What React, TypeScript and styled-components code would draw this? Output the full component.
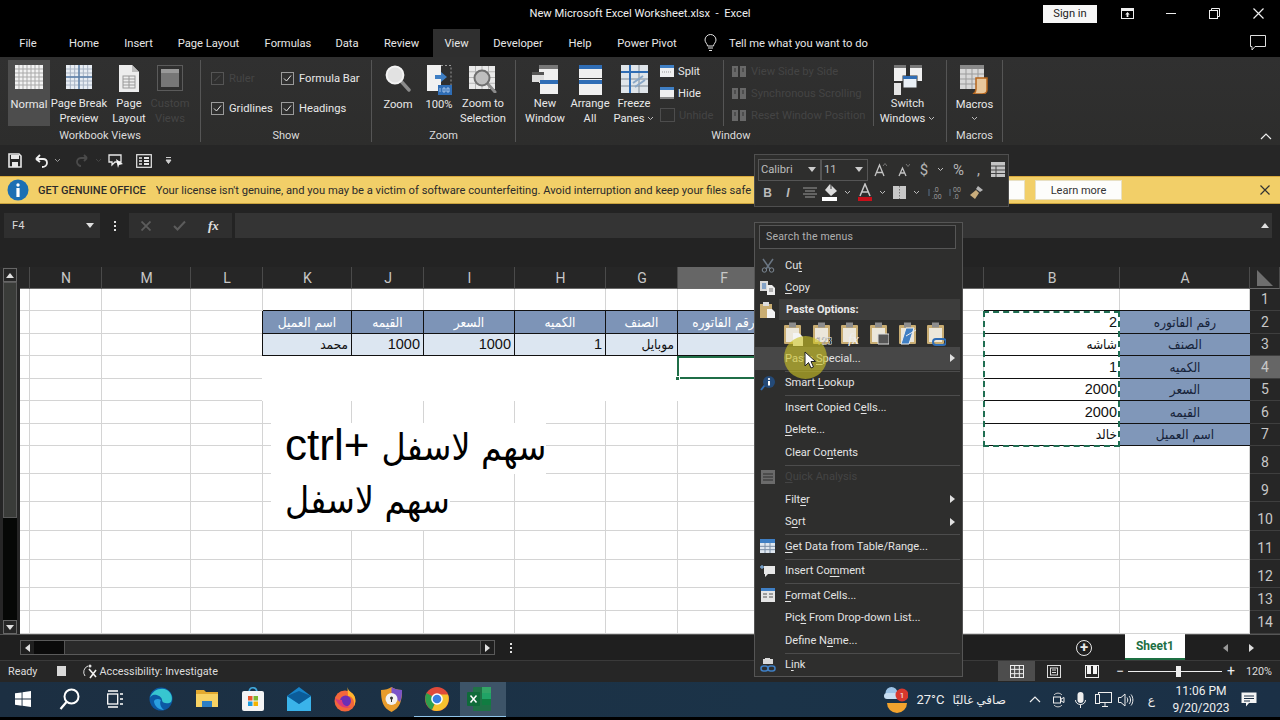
import { FC, ReactNode } from "react";
import styled, { createGlobalStyle } from "styled-components";

const UI = `Roboto, "DejaVu Sans", sans-serif`;
const CELL = `"Liberation Sans", "DejaVu Sans Condensed", "DejaVu Sans", sans-serif`;
const ARABIC = `"DejaVu Sans Condensed", "DejaVu Sans", sans-serif`;

const GlobalStyle = createGlobalStyle`
  html, body { margin: 0; padding: 0; background: #000; }
  * { box-sizing: border-box; }
`;

/* ---------- icons ---------- */
interface IconProps {
  w: number;
  h: number;
  children: ReactNode;
}
const Ic: FC<IconProps> = ({ w, h, children }) => (
  <svg width={w} height={h} viewBox={`0 0 ${w} ${h}`} fill="none" style={{ display: "block", flex: "none" }}>
    {children}
  </svg>
);

const gridLines = (x: number, y: number, w: number, h: number, cols: number, rows: number, c: string) => (
  <>
    {Array.from({ length: cols - 1 }, (_, i) => {
      const px = x + ((i + 1) * w) / cols;
      return <path key={`c${i}`} d={`M${px} ${y}V${y + h}`} stroke={c} strokeWidth="1" />;
    })}
    {Array.from({ length: rows - 1 }, (_, i) => {
      const py = y + ((i + 1) * h) / rows;
      return <path key={`r${i}`} d={`M${x} ${py}H${x + w}`} stroke={c} strokeWidth="1" />;
    })}
  </>
);

const NormalIcon = () => (
  <Ic w={28} h={24}>
    <rect width="28" height="24" fill="#f2f2f2" />
    {gridLines(0, 0, 28, 24, 7, 6, "#a9a9a9")}
  </Ic>
);
const PageBreakIcon = () => (
  <Ic w={26} h={24}>
    <rect width="26" height="24" fill="#e8edf3" />
    {gridLines(0, 0, 26, 24, 6, 6, "#a8b4c4")}
    <path d="M13 0V24M0 12H26" stroke="#5a7ea8" strokeWidth="1.4" />
  </Ic>
);
const PageLayoutIcon = () => (
  <Ic w={20} h={27}>
    <path d="M0 0H13L20 7V27H0Z" fill="#ededed" />
    <path d="M13 0V7H20" fill="#bdbdbd" />
    {gridLines(4, 11, 12, 12, 2, 4, "#9a9a9a")}
    <rect x="4" y="11" width="12" height="12" stroke="#9a9a9a" />
  </Ic>
);
const CustomIcon = () => (
  <Ic w={26} h={26}>
    <rect x=".5" y=".5" width="25" height="25" stroke="#5b5b5b" />
    <rect x="4" y="4" width="18" height="18" fill="#777" />
    <rect x="4" y="4" width="18" height="4" fill="#999" />
  </Ic>
);
const ZoomIcon = () => (
  <Ic w={26} h={27}>
    <path d="M15 15L24 25" stroke="#8b8b8b" strokeWidth="3.4" strokeLinecap="round" />
    <circle cx="10" cy="10" r="8.4" fill="#e2e2e2" stroke="#f3f3f3" strokeWidth="2" />
  </Ic>
);
const HundredIcon = () => (
  <Ic w={25} h={30}>
    <path d="M0 0H14V26H0Z" fill="#f1f1f1" />
    <path d="M14 .5H24V20" stroke="#999" strokeDasharray="2 2" />
    <path d="M8 10H14V7L20 12L14 17V14H8Z" fill="#3f7fc4" />
    <rect x="11" y="20" width="14" height="10" fill="#2f6db5" />
    <path d="M13 23V27M16 23H18V27H16ZM20 23H22V27H20Z" stroke="#bcd6f2" strokeWidth=".8" />
  </Ic>
);
const ZoomSelIcon = () => (
  <Ic w={28} h={28}>
    <rect x="0" y="1" width="26" height="23" fill="#e9e9e9" />
    {gridLines(0, 1, 26, 23, 4, 4, "#b5b5b5")}
    <path d="M18 18L26 27" stroke="#8b8b8b" strokeWidth="3" strokeLinecap="round" />
    <circle cx="13" cy="13" r="7.5" fill="#bfbfbf" stroke="#6f6f6f" strokeWidth="2" />
  </Ic>
);
const NewWindowIcon = () => (
  <Ic w={26} h={29}>
    <rect x="7" y="0" width="19" height="18" fill="#777" />
    <rect x="7" y="4" width="19" height="14" fill="#f0f0f0" />
    <rect x="0" y="7" width="12" height="10" fill="#dedede" />
    <rect x="0" y="7" width="12" height="3" fill="#555" />
    <rect x="8" y="15" width="18" height="14" fill="#f0f0f0" />
    <rect x="8" y="15" width="18" height="4" fill="#2f6db5" />
  </Ic>
);
const ArrangeIcon = () => (
  <Ic w={23} h={30}>
    <rect width="23" height="30" fill="#f0f0f0" />
    <rect width="23" height="4" fill="#2f6db5" />
    <rect y="15" width="23" height="4" fill="#2f6db5" />
    <rect y="13" width="23" height="1" fill="#333" />
  </Ic>
);
const FreezeIcon = () => (
  <Ic w={27} h={28}>
    <rect width="27" height="28" fill="#dfe5ea" />
    {gridLines(0, 0, 27, 28, 3, 4, "#7e8a96")}
    <path d="M9 0V28M0 7H27" stroke="#2f6db5" strokeWidth="2" />
    <path d="M12 18L22 11M14 22L24 15" stroke="#8aa8c8" strokeWidth="2" />
  </Ic>
);
const SmallWinIcon: FC<{ $bottom?: boolean }> = ({ $bottom }) => (
  <Ic w={14} h={12}>
    <rect width="14" height="12" fill="#f0f0f0" />
    <rect width="14" height="3" fill="#3f7fc4" />
    {$bottom ? <rect y="10" width="14" height="2" fill="#8a8a8a" /> : <path d="M2 7H12" stroke="#999" strokeDasharray="1 1" />}
  </Ic>
);
const SmallDimIcon = () => (
  <Ic w={15} h={14}>
    <rect x=".5" y=".5" width="14" height="13" stroke="#4d4d4d" />
  </Ic>
);
const DimDocsIcon = () => (
  <Ic w={15} h={11}>
    <rect width="6" height="11" fill="#686868" />
    <rect x="8" width="6" height="11" fill="#686868" />
    <path d="M2 3H4M2 5H4M10 3H12M10 5H12" stroke="#333" />
  </Ic>
);
const SwitchIcon = () => (
  <Ic w={28} h={30}>
    <rect width="12" height="16" x="0" y="0" fill="#f0f0f0" />
    <rect width="12" height="3" x="0" y="0" fill="#777" />
    <rect width="12" height="16" x="16" y="0" fill="#f0f0f0" />
    <rect width="12" height="3" x="16" y="0" fill="#777" />
    <rect width="7" height="12" x="0" y="18" fill="#e4e4e4" />
    <rect width="14" height="12" x="9" y="11" fill="#eaf0f6" stroke="#333" />
    <rect width="14" height="3" x="9" y="11" fill="#2f6db5" />
  </Ic>
);
const MacrosIcon = () => (
  <Ic w={29} h={29}>
    <rect width="24" height="24" fill="#d8d8d8" />
    <rect width="24" height="4" fill="#8a8a8a" />
    {gridLines(0, 4, 24, 20, 4, 4, "#9b9b9b")}
    <path d="M16 13H27V25C27 28 24 29 22 29H13C15 28 16 26 16 24Z" fill="#e8c79c" stroke="#b5651d" strokeWidth="1.5" />
  </Ic>
);
const ChevronDown: FC<{ color?: string }> = ({ color = "#bdbdbd" }) => (
  <Ic w={7} h={5}>
    <path d="M1 1L3.5 3.5L6 1" stroke={color} />
  </Ic>
);
const CheckBox: FC<{ checked?: boolean; dim?: boolean }> = ({ checked, dim }) => (
  <Ic w={13} h={13}>
    <rect x=".5" y=".5" width="12" height="12" stroke={dim ? "#555" : "#9a9a9a"} />
    {checked && <path d="M3 6.5L5.5 9L10 3.5" stroke="#e6e6e6" />}
    {dim && <path d="M3.5 9L9 3.5" stroke="#555" />}
  </Ic>
);
const SaveIcon = () => (
  <Ic w={14} h={15}>
    <path d="M1 1H11L13 3V14H1Z" stroke="#e8e8e8" strokeWidth="1.6" />
    <rect x="3" y="2" width="8" height="4" fill="#e8e8e8" />
    <rect x="4" y="9" width="6" height="5" fill="#e8e8e8" />
  </Ic>
);
const UndoIcon: FC<{ dim?: boolean }> = ({ dim }) => (
  <Ic w={15} h={14}>
    <path
      d={dim ? "M12 4L9 1M12 4L9 7M12 4H6C3 4 2 6 2 8C2 10 4 12 6 12" : "M2 5L6 1M2 5L6 8M2 5H9C12 5 13 7 13 9C13 11 11 13 8 13"}
      stroke={dim ? "#4a4a4a" : "#f0f0f0"}
      strokeWidth="1.8"
    />
  </Ic>
);
const TouchIcon = () => (
  <Ic w={16} h={16}>
    <path d="M1 2H13V9H7L4 12V9H1Z" stroke="#e8e8e8" strokeWidth="1.3" />
    <path d="M8 6L15 11L11 12L10 15Z" fill="#f5f5f5" />
  </Ic>
);
const FormIcon = () => (
  <Ic w={16} h={14}>
    <rect x=".7" y=".7" width="14.6" height="12.6" stroke="#e8e8e8" strokeWidth="1.2" />
    <path d="M3 4H6M3 7H6M3 10H6" stroke="#e8e8e8" strokeWidth="1.4" />
    <rect x="8" y="3" width="5" height="2" fill="#e8e8e8" />
    <rect x="8" y="6" width="5" height="2" fill="#e8e8e8" />
    <rect x="8" y="9" width="5" height="2" fill="#e8e8e8" />
  </Ic>
);
const QatMore = () => (
  <Ic w={7} h={9}>
    <path d="M1 1.5H6M1 4L3.5 7.5L6 4Z" stroke="#cfcfcf" fill="#cfcfcf" />
  </Ic>
);
const InfoIcon = () => (
  <Ic w={22} h={22}>
    <circle cx="11" cy="11" r="10.5" fill="#1d6fb3" />
    <circle cx="11" cy="6" r="1.7" fill="#fff" />
    <rect x="9.4" y="9" width="3.2" height="9" fill="#fff" />
  </Ic>
);
const CloseX: FC<{ size?: number; color?: string; weight?: number }> = ({ size = 10, color = "#333", weight = 1.2 }) => (
  <Ic w={size} h={size}>
    <path d={`M.5 .5L${size - 0.5} ${size - 0.5}M${size - 0.5} .5L.5 ${size - 0.5}`} stroke={color} strokeWidth={weight} />
  </Ic>
);
const BulbIcon = () => (
  <Ic w={13} h={18}>
    <path d="M3.5 12C3.5 10 1 8.5 1 6A5.5 5.5 0 0 1 12 6C12 8.5 9.5 10 9.5 12Z" stroke="#e5e5e5" />
    <path d="M4 14H9M5 16.5H8" stroke="#e5e5e5" />
  </Ic>
);
const CommentIcon = () => (
  <Ic w={16} h={16}>
    <path d="M.5 .5H15.5V11.5H5L2 15V11.5H.5Z" stroke="#dedede" />
  </Ic>
);
const RestoreIcon = () => (
  <Ic w={11} h={11}>
    <path d="M2.5 2.5V.5H10.5V8.5H8.5" stroke="#eee" />
    <rect x=".5" y="2.5" width="8" height="8" stroke="#eee" />
  </Ic>
);
const DisplayIcon = () => (
  <Ic w={13} h={11}>
    <rect x=".5" y=".5" width="12" height="10" stroke="#eee" />
    <path d="M1 1H12V3H1ZM6.5 4L4.2 6.5H5.6V9H7.4V6.5H8.8Z" fill="#eee" />
  </Ic>
);
const CheckMark = () => (
  <Ic w={13} h={11}>
    <path d="M1 6L4.5 9.5L12 1.5" stroke="#5c5c5c" strokeWidth="2" />
  </Ic>
);
const Caret: FC<{ dir: "up" | "down" | "left" | "right"; color?: string }> = ({ dir, color = "#e0e0e0" }) => {
  const d = { up: "M0 5L4 0L8 5Z", down: "M0 0H8L4 5Z", left: "M5 0V8L0 4Z", right: "M0 0V8L5 4Z" }[dir];
  return (
    <Ic w={dir === "up" || dir === "down" ? 8 : 5} h={dir === "up" || dir === "down" ? 5 : 8}>
      <path d={d} fill={color} />
    </Ic>
  );
};

/* mini toolbar glyphs */
const GrowA: FC<{ small?: boolean }> = ({ small }) => (
  <Ic w={13} h={15}>
    <path d={small ? "M2 14L5.5 6L9 14M3.4 11H7.6" : "M1 14L5.5 3L10 14M2.8 10.5H8.2"} stroke="#c4c4c4" strokeWidth="1.3" />
    <path d={small ? "M9 2L11 4.5L13 2" : "M9 4L11 1.5L13 4"} stroke="#888" strokeWidth=".8" />
  </Ic>
);
const TableTiny = () => (
  <Ic w={14} h={15}>
    <rect width="14" height="15" fill="#c4c4c4" />
    <path d="M0 4H14M0 8H14M0 11.5H14" stroke="#444" />
    <path d="M5 4V15" stroke="#444" />
  </Ic>
);
const AlignIcon = () => (
  <Ic w={14} h={11}>
    <path d="M0 1H14M2 4H12M0 7H14M2 10H12" stroke="#999" />
  </Ic>
);
const FillIcon = () => (
  <Ic w={17} h={19}>
    <path d="M8 1L15 8L9 13L3 7Z" fill="#dcdcdc" />
    <path d="M9 1V6" stroke="#333" />
    <rect y="14" width="15" height="4" fill="#fff" />
  </Ic>
);
const FontColorIcon = () => (
  <Ic w={14} h={19}>
    <path d="M2 13L7 1L12 13M3.8 9H10.2" stroke="#c8c8c8" strokeWidth="1.5" />
    <rect y="14" width="14" height="4" fill="#c8101a" />
  </Ic>
);
const BorderIcon = () => (
  <Ic w={13} h={13}>
    <rect width="13" height="13" fill="#c8c8c8" />
    <path d="M6.5 0V13" stroke="#777" strokeDasharray="1.5 1.5" />
  </Ic>
);
const DecimalIcon: FC<{ flip?: boolean }> = ({ flip }) => (
  <Ic w={14} h={14}>
    <text x={flip ? 4 : 5} y="6" fontSize="7" fontFamily={UI} fill="#999">{flip ? "00" : ".0"}</text>
    <text x="4" y="13" fontSize="7" fontFamily={UI} fill="#999">{flip ? ".0" : ".00"}</text>
    <path d="M1 3V10" stroke="#56718f" />
  </Ic>
);
const BrushIcon = () => (
  <Ic w={15} h={15}>
    <path d="M9 1L14 5L11 7L7 4Z" fill="#b5b5b5" />
    <path d="M7 5L10 8L6 14L1 10Z" fill="#c9ad7c" />
  </Ic>
);

/* context menu glyphs */
const ScissorsIcon = () => (
  <Ic w={14} h={15}>
    <path d="M2 1L9 11M12 1L5 11" stroke="#6a7683" strokeWidth="1.5" />
    <circle cx="3.4" cy="12" r="2.2" stroke="#7d8894" />
    <circle cx="10.6" cy="12" r="2.2" stroke="#7d8894" />
  </Ic>
);
const CopyIcon = () => (
  <Ic w={15} h={14}>
    <rect x="0" y="0" width="8" height="10" fill="#d8d8d8" />
    <path d="M2 3H6M2 5H6M2 7H6" stroke="#2f6db5" />
    <path d="M7 4H12L15 7V14H7Z" fill="#eeeeee" />
    <path d="M9 8H13M9 10H13" stroke="#777" />
  </Ic>
);
const PasteIcon = () => (
  <Ic w={15} h={16}>
    <rect y="2" width="12" height="14" fill="#c9ad72" />
    <rect x="3" y="0" width="6" height="4" fill="#ddd" />
    <path d="M7 7H12L15 10V16H7Z" fill="#f3f3f3" />
  </Ic>
);
const PasteBoard: FC<{ tag?: ReactNode }> = ({ tag }) => (
  <Ic w={20} h={24}>
    <rect x="1" y="3" width="17" height="19" rx="1" fill="#c9ad72" />
    <rect x="3" y="6" width="13" height="14" fill="#ece7da" />
    <rect x="6" y="0.5" width="7" height="5" fill="#8d8d8d" />
    {tag}
  </Ic>
);
const LookupIcon = () => (
  <Ic w={16} h={16}>
    <path d="M5 10L1 15" stroke="#2f6db5" strokeWidth="2" />
    <circle cx="9" cy="7" r="6" fill="#244a78" />
    <circle cx="9" cy="4" r="1.1" fill="#fff" />
    <rect x="8" y="6" width="2" height="4.5" fill="#fff" />
  </Ic>
);
const QuickIcon = () => (
  <Ic w={14} h={14}>
    <rect width="14" height="14" fill="#6b6b6b" />
    <path d="M2 4H12M2 7H12M2 10H12" stroke="#2e2e2e" />
  </Ic>
);
const DataTableIcon = () => (
  <Ic w={15} h={14}>
    <rect width="15" height="14" fill="#dfe7f0" />
    <rect width="15" height="4" fill="#3f7fc4" />
    {gridLines(0, 4, 15, 10, 3, 3, "#7c90a8")}
  </Ic>
);
const AddNoteIcon = () => (
  <Ic w={15} h={14}>
    <path d="M4 2H15V10H8L5 13V10H4Z" fill="#e8e8e8" />
    <path d="M0 3H4M2 1V5" stroke="#7aa7d4" strokeWidth="1.3" />
  </Ic>
);
const FormatCellsIcon = () => (
  <Ic w={14} h={14}>
    <rect width="14" height="14" fill="#e5e5e5" />
    <rect width="14" height="3" fill="#3f7fc4" />
    <path d="M2 6H6M8 6H12M2 9H6M8 9H12" stroke="#555" />
  </Ic>
);
const LinkIcon = () => (
  <Ic w={16} h={16}>
    <path d="M3 7V2H5V1H10V2H13V7Z" fill="#d9d9d9" />
    <rect x="1" y="9" width="7" height="5" rx="2.5" stroke="#3f7fc4" strokeWidth="1.6" />
    <rect x="8" y="9" width="7" height="5" rx="2.5" stroke="#3f7fc4" strokeWidth="1.6" />
  </Ic>
);

/* taskbar glyphs */
const WinLogo = () => (
  <Ic w={16} h={16}>
    <path d="M0 2.3L6.6 1.4V7.6H0ZM7.5 1.3L16 0V7.6H7.5ZM0 8.5H6.6V14.7L0 13.7ZM7.5 8.5H16V16L7.5 14.8Z" fill="#fff" />
  </Ic>
);
const SearchTaskIcon = () => (
  <Ic w={21} h={22}>
    <circle cx="12.5" cy="8.5" r="7" stroke="#fff" strokeWidth="2" />
    <path d="M7.5 14L1.5 21" stroke="#fff" strokeWidth="2.2" />
  </Ic>
);
const TaskViewIcon = () => (
  <Ic w={16} h={18}>
    <rect x=".7" y="4" width="10" height="10" stroke="#fff" strokeWidth="1.3" />
    <path d="M1 1H11M1 17H11M13 4H16M13 9H16M13 14H16" stroke="#fff" strokeWidth="1.5" />
  </Ic>
);
const EdgeIcon = () => (
  <Ic w={24} h={24}>
    <circle cx="12" cy="12" r="11.5" fill="#0c59a4" />
    <path d="M1 11C3 3 12 0 18 3C23 6 24 12 22 15C20 17 13 17 13 13C13 10 8 7 4 8C2.5 8.500 1.500 9.500 1 11Z" fill="#37c6d0" />
    <path d="M5 14C5 19 10 23 15 23C12 21 10 16 12 13C9 11 6 12 5 14Z" fill="#2a9fe0" />
  </Ic>
);
const FolderIcon = () => (
  <Ic w={22} h={20}>
    <path d="M0 1H8L10 3H22V18H0Z" fill="#e2a92f" />
    <rect y="5" width="22" height="13" fill="#f7d264" />
    <rect x="6" y="12" width="10" height="6" fill="#2f7fc4" />
  </Ic>
);
const StoreIcon = () => (
  <Ic w={22} h={24}>
    <path d="M7 6C7 -1 15 -1 15 6" stroke="#3fa6d9" strokeWidth="1.6" />
    <rect y="4" width="22" height="20" rx="2" fill="#f4f4f4" />
    <rect x="6" y="9" width="4.500" height="4.500" fill="#e8552c" />
    <rect x="11.500" y="9" width="4.500" height="4.500" fill="#7cb82f" />
    <rect x="6" y="14.500" width="4.500" height="4.500" fill="#1c9ce0" />
    <rect x="11.500" y="14.500" width="4.500" height="4.500" fill="#f4b400" />
  </Ic>
);
const MailIcon = () => (
  <Ic w={24} h={24}>
    <path d="M12 0L24 9V24H0V9Z" fill="#1683c9" />
    <path d="M0 9L12 17L24 9V24H0Z" fill="#3ab3ea" />
    <path d="M0 9L12 17L24 9L12 4Z" fill="#0b5c99" />
  </Ic>
);
const FirefoxIcon = () => (
  <Ic w={22} h={26}>
    <circle cx="11" cy="15" r="10.5" fill="#f2663b" />
    <path d="M14 0C13 4 16 5 19 8C22 11 22 17 20 20C21 13 17 10 14 10C14 6 13 3 14 0Z" fill="#ffb52e" />
    <circle cx="11.500" cy="15" r="5.500" fill="#6a2fb6" />
    <path d="M1 12C3 18 9 24 17 21C10 21 8 17 8 14C6 14 3 14 1 12Z" fill="#d93a7a" />
  </Ic>
);
const VpnIcon = () => (
  <Ic w={21} h={25}>
    <path d="M10.500 0C13 2 17 3 21 3C21 14 19 21 10.500 25C2 21 0 14 0 3C4 3 8 2 10.500 0Z" fill="#e89c2c" />
    <path d="M10.500 0C13 2 17 3 21 3C21 8 20.500 12 19 15L10.500 8Z" fill="#7a53c9" />
    <circle cx="10.500" cy="12" r="6" fill="#f2f2f2" />
    <circle cx="10.500" cy="11" r="1.500" fill="#333" />
    <rect x="10" y="11" width="1" height="4" fill="#333" />
  </Ic>
);
const ChromeIcon = () => (
  <Ic w={24} h={24}>
    <circle cx="12" cy="12" r="12" fill="#e04a3a" />
    <path d="M12 12L1.500 6C-1 11 0 19 7 23Z" fill="#2fa04c" />
    <path d="M12 12L7 23C12 25 20 24 23 16C24 13 24 10 23 7.500H12Z" fill="#f6c22e" />
    <circle cx="12" cy="12" r="5.800" fill="#fff" />
    <circle cx="12" cy="12" r="4.300" fill="#3a7ee0" />
  </Ic>
);
const ExcelIcon = () => (
  <Ic w={24} h={24}>
    <rect x="6" width="18" height="24" rx="1" fill="#1f7246" />
    <rect x="15" width="9" height="6" fill="#33a567" />
    <rect x="15" y="6" width="9" height="6" fill="#21a366" />
    <rect x="15" y="12" width="9" height="6" fill="#107c41" />
    <rect y="5" width="13" height="14" rx="1" fill="#0f6b3a" />
    <path d="M3.500 8.500L9.500 15.500M9.500 8.500L3.500 15.500" stroke="#fff" strokeWidth="1.5" />
  </Ic>
);
const WeatherIcon = () => (
  <Ic w={24} h={28}>
    <path d="M3 17A10 10 0 0 0 23 17Z" fill="#f2a32e" />
    <circle cx="7.500" cy="7" r="6" fill="#9dc3e6" />
    <rect x="0" y="7" width="15" height="6" rx="3" fill="#c8def2" />
    <circle cx="18" cy="9" r="6.500" fill="#d8382e" />
    <text x="15.800" y="12" fontSize="8" fontFamily={UI} fill="#fff">1</text>
  </Ic>
);
const TrayChevron = () => (
  <Ic w={12} h={7}>
    <path d="M1 6L6 1L11 6" stroke="#eee" strokeWidth="1.2" />
  </Ic>
);
const MeetIcon = () => (
  <Ic w={13} h={16}>
    <path d="M2 3C4 .5 8 .5 10 3M2 13C4 15.500 8 15.500 10 13" stroke="#cfcfcf" />
    <rect x="1.500" y="5" width="7" height="6" stroke="#eee" />
    <path d="M9 7L12 5.500V10.500L9 9Z" stroke="#eee" />
  </Ic>
);
const MicIcon = () => (
  <Ic w={11} h={16}>
    <rect x="2.500" y="0" width="6" height="11" rx="3" fill="#eee" />
    <path d="M.5 8C.5 11 3 12.500 5.500 12.500S10.500 11 10.500 8M5.500 12.500V16" stroke="#eee" />
  </Ic>
);
const NetIcon = () => (
  <Ic w={17} h={15}>
    <rect x="3.500" y=".5" width="13" height="10" stroke="#eee" />
    <rect x=".5" y="2.500" width="4" height="9" fill="#1c3046" stroke="#eee" />
    <path d="M10 11V14M7 14.500H13" stroke="#eee" />
  </Ic>
);
const SpeakerIcon = () => (
  <Ic w={16} h={14}>
    <path d="M.5 4.500H3L7 1V13L3 9.500H.5Z" stroke="#eee" />
    <path d="M9 4.500C10 6 10 8 9 9.500M11 3C13 5 13 9 11 11M13 1.500C15.500 4.500 15.500 9.500 13 12.500" stroke="#eee" />
  </Ic>
);
const NotifyIcon = () => (
  <Ic w={16} h={15}>
    <path d="M.5 .5H15.5V11H8L5 14.500V11H.5Z" fill="#f4f4f4" />
    <path d="M3 4H13M3 6.500H13M3 9H9" stroke="#1c3046" />
  </Ic>
);
const AccessIcon = () => (
  <Ic w={16} h={16}>
    <path d="M6 3A6.500 6.500 0 0 0 3 13" stroke="#e0e0e0" />
    <circle cx="8" cy="3" r="1.500" fill="#e0e0e0" />
    <path d="M7 6L14 14M14 7L8 15" stroke="#f2f2f2" strokeWidth="1.600" />
  </Ic>
);
const NormalViewIcon = () => (
  <Ic w={14} h={13}>
    <rect x=".5" y=".5" width="13" height="12" stroke="#eee" />
    {gridLines(0, 0, 14, 13, 3, 3, "#eee")}
  </Ic>
);
const LayoutViewIcon = () => (
  <Ic w={14} h={13}>
    <rect x=".5" y=".5" width="13" height="12" stroke="#ddd" />
    <rect x="3.500" y="3" width="7" height="7" stroke="#ddd" />
    <path d="M5 5H9M5 7.500H9" stroke="#ddd" />
  </Ic>
);
const BreakViewIcon = () => (
  <Ic w={14} h={13}>
    <rect x=".5" y=".5" width="13" height="12" stroke="#eee" />
    <path d="M2 1H6V9H2ZM8 1H12V9H8Z" fill="#f4f4f4" />
  </Ic>
);
const CornerMark = () => (
  <Ic w={18} h={18}>
    <path d="M1 1L17 17H1Z" fill="#6e6e6e" />
  </Ic>
);

/* ---------- page ---------- */
const Page = styled.div`
  position: relative;
  width: 1280px;
  height: 720px;
  overflow: hidden;
  background: #000;
  color: #e8e8e8;
  font-family: ${UI};
  font-size: 11.2px;
  display: flex;
  flex-direction: column;
`;

const TitleBar = styled.div`
  height: 28px;
  flex: none;
  display: grid;
  grid-template-columns: 1fr auto 1fr;
  align-items: center;
  padding-bottom: 1px;
`;
const DocTitle = styled.div`
  grid-column: 2;
  color: #eee;
  white-space: pre;
`;
const WindowButtons = styled.div`
  display: flex;
  align-items: center;
  justify-content: flex-end;
`;
const SignIn = styled.div`
  width: 54px;
  height: 18px;
  margin-right: 9px;
  background: #f6f6f6;
  color: #222;
  display: flex;
  align-items: center;
  justify-content: center;
`;
const WinBtn = styled.div`
  width: 43.5px;
  height: 22px;
  display: flex;
  align-items: center;
  justify-content: center;
`;
const MinDash = styled.div`
  width: 10px;
  height: 1px;
  background: #eee;
`;

const TabRow = styled.div`
  height: 29px;
  flex: none;
  display: flex;
  align-items: stretch;
  position: relative;
`;
const Tab = styled.div<{ $w: number; $active?: boolean }>`
  width: ${(p) => p.$w}px;
  flex: none;
  display: flex;
  align-items: center;
  justify-content: center;
  padding-top: ${(p) => (p.$active ? 0 : 1)}px;
  color: #e6e6e6;
  background: ${(p) => (p.$active ? "#2f2f2f" : "transparent")};
  margin-top: ${(p) => (p.$active ? 1 : 0)}px;
`;
const TellMe = styled.div`
  display: flex;
  align-items: center;
  gap: 12px;
  margin-left: 14px;
  padding-top: 1px;
  color: #e6e6e6;
`;
const TabEnd = styled.div`
  margin-left: auto;
  padding-right: 14px;
  display: flex;
  align-items: center;
`;

const Ribbon = styled.div`
  height: 88px;
  flex: none;
  background: linear-gradient(#303030, #2d2d2c);
  display: flex;
  padding-top: 3px;
  position: relative;
`;
const Group = styled.div<{ $w: number; $noLine?: boolean }>`
  width: ${(p) => p.$w}px;
  flex: none;
  height: 82px;
  display: flex;
  flex-direction: column;
  border-right: ${(p) => (p.$noLine ? "none" : "1px solid #555")};
`;
const GroupBody = styled.div<{ $pad?: number }>`
  height: 67px;
  display: flex;
  padding-left: ${(p) => p.$pad ?? 0}px;
`;
const GroupLabel = styled.div`
  height: 15px;
  line-height: 18px;
  text-align: center;
  font-size: 11px;
  color: #dcdcdc;
`;
const BigBtn = styled.div<{ $w: number; $on?: boolean; $dim?: boolean }>`
  width: ${(p) => p.$w}px;
  height: 66px;
  flex: none;
  display: flex;
  flex-direction: column;
  align-items: center;
  background: ${(p) => (p.$on ? "#4d4d4d" : "transparent")};
  color: ${(p) => (p.$dim ? "#454545" : "#e8e8e8")};
`;
const BigIcon = styled.div`
  height: 37px;
  display: flex;
  align-items: flex-start;
  padding-top: 5px;
`;
const BigText = styled.div`
  line-height: 15px;
  text-align: center;
  white-space: pre;
`;
const ChevInline = styled.span`
  display: inline-block;
  vertical-align: 1px;
  margin-left: 3px;
`;
const ChevLine = styled.div`
  display: flex;
  justify-content: center;
  padding-top: 4px;
`;

const CheckGrid = styled.div`
  display: grid;
  grid-template-columns: 70px 80px;
  grid-template-rows: 30px 30px;
  padding: 3px 0 0 10px;
`;
const CheckRow = styled.div<{ $dim?: boolean }>`
  display: flex;
  align-items: center;
  gap: 5px;
  color: ${(p) => (p.$dim ? "#454545" : "#e8e8e8")};
  white-space: nowrap;
`;
const SmallCol = styled.div<{ $w: number; $pad: number }>`
  width: ${(p) => p.$w}px;
  flex: none;
  display: flex;
  flex-direction: column;
  padding-left: ${(p) => p.$pad}px;
  height: 66px;
  justify-content: space-between;
  border-right: 1px solid #555;
`;
const SmallRow = styled.div<{ $dim?: boolean }>`
  display: flex;
  align-items: center;
  gap: 4px;
  height: 22px;
  white-space: nowrap;
  color: ${(p) => (p.$dim ? "#444" : "#e8e8e8")};
`;
const Collapse = styled.div`
  position: absolute;
  right: 8px;
  bottom: 5px;
`;

const Qat = styled.div`
  height: 31px;
  flex: none;
  background: #262626;
  display: flex;
  align-items: center;
  padding-left: 8px;
`;
const QatItem = styled.div<{ $w: number }>`
  width: ${(p) => p.$w}px;
  flex: none;
  display: flex;
  align-items: center;
`;

const MessageBar = styled.div`
  height: 28px;
  flex: none;
  background: #f2cf68;
  border-top: 1px solid #d9a93d;
  border-bottom: 1px solid #c9a23e;
  display: flex;
  align-items: center;
  padding-left: 7px;
  color: #2b2b2b;
  font-size: 11px;
`;
const MsgLabel = styled.b`
  margin-left: 9px;
  font-weight: 500;
  white-space: nowrap;
`;
const MsgText = styled.div`
  margin-left: 10px;
  flex: 1;
  min-width: 0;
  font-size: 11.2px;
  white-space: nowrap;
  overflow: hidden;
`;
const MsgButton = styled.div<{ $w: number }>`
  width: ${(p) => p.$w}px;
  height: 20px;
  margin-right: 10px;
  flex: none;
  background: #fdfdfb;
  border: 1px solid #e8e0c4;
  display: flex;
  align-items: center;
  justify-content: center;
  color: #333;
`;
const MsgClose = styled.div`
  width: 148px;
  flex: none;
  display: flex;
  justify-content: flex-end;
  padding-right: 10px;
`;

const FormulaWrap = styled.div`
  height: 63px;
  flex: none;
  background: #232323;
  padding-top: 9px;
`;
const FormulaBar = styled.div`
  height: 25px;
  display: flex;
  align-items: stretch;
  padding: 0 8px 0 4px;
`;
const NameBox = styled.div`
  width: 96px;
  background: #2f2f2f;
  display: flex;
  align-items: center;
  justify-content: space-between;
  padding: 0 6px 0 8px;
  color: #d8d8d8;
`;
const Dots = styled.div`
  width: 29px;
  display: flex;
  flex-direction: column;
  align-items: center;
  justify-content: center;
  gap: 2px;
`;
const Dot = styled.span`
  width: 2px;
  height: 2px;
  background: #e0e0e0;
`;
const FxBox = styled.div`
  width: 103px;
  background: #2f2f2f;
  display: flex;
  align-items: center;
  padding-left: 12px;
  gap: 22px;
`;
const Fx = styled.span`
  font-family: "Liberation Serif", serif;
  font-style: italic;
  font-weight: 700;
  font-size: 13px;
  color: #e0e0e0;
`;
const FormulaInput = styled.div`
  flex: 1;
  margin-left: 3px;
  background: #343434;
  display: flex;
  justify-content: flex-end;
  align-items: center;
  padding-right: 3px;
`;

const SheetArea = styled.div`
  height: 367px;
  flex: none;
  display: flex;
  position: relative;
  background: #262626;
`;
const VScroll = styled.div`
  width: 20px;
  flex: none;
  display: flex;
  flex-direction: column;
  align-items: center;
  padding-top: 1px;
`;
const VBtn = styled.div`
  width: 14px;
  height: 14px;
  flex: none;
  border: 1px solid #666;
  display: flex;
  align-items: center;
  justify-content: center;
`;
const VThumb = styled.div`
  width: 14px;
  height: 236px;
  flex: none;
  background: #3a3c39;
  border: 1px solid #5a5a5a;
`;
const VTrack = styled.div`
  width: 14px;
  flex: 1;
  background: #060806;
`;
const Grid = styled.div`
  flex: 1;
  display: grid;
  grid-template-columns: 10px 72px 89px 72px 89px 72px 91px 91px 72px 92px 71px 70px 73px 136px 130px 30px;
  grid-template-rows: 22px 22px repeat(6, 22.5px) 28px 28px 29px 29px 28px 23px 23px;
`;
const ColHead = styled.div<{ $on?: boolean }>`
  background: ${(p) => (p.$on ? "#666" : "#262626")};
  border-right: 1px solid #4a4a4a;
  border-bottom: 1px solid #6a6a6a;
  color: #c8c8c8;
  font-size: 14px;
  padding-left: 1px;
  display: flex;
  align-items: center;
  justify-content: center;
`;
const RowHead = styled.div<{ $on?: boolean }>`
  background: ${(p) => (p.$on ? "#666" : "#262626")};
  border-bottom: 1px solid #3e3e3e;
  color: #c8c8c8;
  font-size: 14px;
  line-height: 20px;
  padding-bottom: 1px;
  display: flex;
  align-items: flex-end;
  justify-content: center;
`;
const cellKinds = {
  plain: "background:#fff;border-right:1px solid #d4d4d4;border-bottom:1px solid #d4d4d4;",
  head: "background:#7d94b7;color:#fff;justify-content:center;border-right:1px solid #111;border-bottom:1px solid #111;box-shadow:0 -1px 0 #111,-1px 0 0 #111;",
  body: "background:#dce6f1;color:#111;justify-content:flex-end;padding-right:3px;border-right:1px solid #111;border-bottom:1px solid #111;box-shadow:-1px 0 0 #111;",
  label: "background:#8097b9;color:#16233a;justify-content:center;border-bottom:1px solid #111;box-shadow:0 -1px 0 #111;",
  value: "background:#fff;color:#111;justify-content:flex-end;padding-right:3px;border-bottom:1px solid #111;box-shadow:0 -1px 0 #111;",
};
const Cell = styled.div<{ $kind: keyof typeof cellKinds; $arabic?: boolean }>`
  ${(p) => cellKinds[p.$kind]}
  display: flex;
  align-items: center;
  font-family: ${(p) => (p.$arabic ? ARABIC : CELL)};
  font-size: ${(p) => (p.$arabic ? 13.5 : 14.5)}px;
  white-space: nowrap;
  overflow: hidden;
  min-width: 0;
`;
const Whiteout = styled.div`
  position: absolute;
  left: 262px;
  top: 89px;
  width: 492px;
  height: 45px;
  background: #fff;
`;
const Ants = styled.div`
  position: absolute;
  left: 983px;
  top: 44px;
  width: 137px;
  height: 136px;
  border: 2px dashed #1f6e52;
`;
const Selection = styled.div`
  position: absolute;
  left: 677px;
  top: 89px;
  width: 100px;
  height: 23px;
  border: 2px solid #1f6e47;
`;
const Handle = styled.div`
  position: absolute;
  left: -4px;
  bottom: -4px;
  width: 5px;
  height: 5px;
  background: #1f6e47;
  border: 1px solid #fff;
`;
const Caption = styled.div`
  position: absolute;
  left: 271px;
  top: 156px;
  display: flex;
  flex-direction: column;
  align-items: flex-start;
  font-family: ${CELL};
  font-size: 44px;
  color: #000;
`;
const CaptionLine = styled.div<{ $h: number }>`
  height: ${(p) => p.$h}px;
  line-height: ${(p) => p.$h - 8}px;
  background: #fff;
  padding: 0 0 0 14px;
  white-space: pre;
`;
const CaptionArabic = styled.span`
  font-family: ${ARABIC};
  font-size: 37px;
`;

const SheetBar = styled.div`
  height: 26px;
  flex: none;
  background: #1f1f1f;
  display: flex;
  align-items: center;
  padding-left: 20px;
  position: relative;
  border-top: 1px solid #555;
`;
const HScroll = styled.div`
  width: 475px;
  height: 15px;
  flex: none;
  display: flex;
  border: 1px solid #5a5a5a;
`;
const HBtn = styled.div`
  width: 13px;
  flex: none;
  display: flex;
  align-items: center;
  justify-content: center;
`;
const HThumb = styled.div`
  width: 30px;
  flex: none;
  background: #0a0a0a;
`;
const HTrack = styled.div`
  flex: 1;
  background: #2a2a2a;
  border-left: 1px solid #555;
  border-right: 1px solid #555;
`;
const HDots = styled(Dots)`
  width: 32px;
`;
const AddSheet = styled.div`
  margin-left: 549px;
  width: 16px;
  height: 16px;
  border: 1.4px solid #e8e8e8;
  border-radius: 50%;
  display: flex;
  align-items: center;
  justify-content: center;
  font-size: 15px;
  line-height: 1;
  font-weight: 700;
  color: #e8e8e8;
`;
const SheetTab = styled.div`
  margin-left: 33px;
  width: 60px;
  height: 26px;
  align-self: flex-start;
  margin-top: -1px;
  background: #fff;
  border-bottom: 2px solid #1d6f42;
  color: #1d6f42;
  font-weight: 700;
  font-size: 12px;
  display: flex;
  align-items: center;
  justify-content: center;
`;
const TabArrows = styled.div`
  margin-left: 38px;
  display: flex;
  gap: 21px;
`;

const StatusBar = styled.div`
  height: 22px;
  flex: none;
  background: #262626;
  border-top: 1px solid #3a3a3a;
  display: flex;
  align-items: center;
  padding: 0 0 1px 8px;
  color: #ddd;
  font-size: 10.8px;
`;
const MacroBox = styled.div`
  width: 9px;
  height: 10px;
  margin-left: 20px;
  background: #d9d9d9;
`;
const Access = styled.div`
  margin-left: 16px;
  display: flex;
  align-items: center;
  gap: 1px;
`;
const ViewBtn = styled.div<{ $on?: boolean; $w: number }>`
  width: ${(p) => p.$w}px;
  height: 100%;
  flex: none;
  background: ${(p) => (p.$on ? "#4d4d4d" : "transparent")};
  display: flex;
  align-items: center;
  justify-content: center;
`;
const ViewGroup = styled.div`
  margin-left: auto;
  height: 100%;
  display: flex;
  align-items: center;
`;
const ZoomSlider = styled.div`
  width: 94px;
  height: 1px;
  margin: 0 3px 0 2px;
  background: #eee;
  position: relative;
`;
const ZoomThumb = styled.div`
  position: absolute;
  left: 48px;
  top: -5px;
  width: 5px;
  height: 11px;
  background: #eee;
`;
const ZoomSign = styled.div<{ $ml?: number }>`
  color: #eee;
  font-size: 14px;
  width: 12px;
  text-align: center;
  margin-left: ${(p) => p.$ml ?? 0}px;
`;
const ZoomPct = styled.div`
  width: 43px;
  text-align: right;
  padding-right: 8px;
`;

const Taskbar = styled.div`
  height: 35px;
  flex: none;
  background: linear-gradient(90deg, #1c2f42, #1b3348 60%, #1b3046);
  display: flex;
  align-items: center;
  color: #eee;
`;
const TaskBtn = styled.div<{ $on?: boolean; $bar?: boolean }>`
  width: 46px;
  height: 100%;
  flex: none;
  display: flex;
  align-items: center;
  justify-content: center;
  padding-right: ${(p) => (p.$on ? 8 : 0)}px;
  background: ${(p) => (p.$on ? "#3d5468" : "transparent")};
  border-bottom: 1.5px solid ${(p) => (p.$bar ? "#8fc4ea" : "transparent")};
`;
const Tray = styled.div`
  margin-left: auto;
  height: 100%;
  display: flex;
  align-items: center;
  font-size: 12px;
  padding-right: 15px;
`;
const TrayText = styled.div<{ $ml?: number; $mr?: number; $size?: number }>`
  margin-left: ${(p) => p.$ml ?? 0}px;
  margin-right: ${(p) => p.$mr ?? 0}px;
  font-size: ${(p) => p.$size ?? 12}px;
  white-space: nowrap;
`;
const TrayIcon = styled.div`
  width: 22.5px;
  display: flex;
  justify-content: center;
`;
const Clock = styled.div`
  width: 64px;
  margin-left: 14px;
  text-align: center;
  line-height: 17px;
  font-size: 12px;
`;
const Notify = styled.div`
  width: 32px;
  display: flex;
  justify-content: center;
`;
const Foot = styled.div`
  height: 3px;
  flex: none;
  background: #000;
`;

/* mini toolbar */
const MiniBar = styled.div`
  position: absolute;
  left: 754px;
  top: 154px;
  width: 255px;
  height: 53px;
  background: #2e2e2d;
  border: 1px solid #4f4f4f;
  padding: 3px 0 0 3px;
  display: flex;
  flex-direction: column;
  z-index: 3;
`;
const MiniRow = styled.div`
  height: 23px;
  display: flex;
  align-items: center;
`;
const MiniCombo = styled.div<{ $w: number }>`
  width: ${(p) => p.$w}px;
  height: 22px;
  flex: none;
  border: 1px solid #555;
  display: flex;
  align-items: center;
  justify-content: space-between;
  padding: 0 4px 0 2px;
  color: #bdbdbd;
`;
const MiniIcon = styled.div<{ $w: number }>`
  width: ${(p) => p.$w}px;
  flex: none;
  display: flex;
  align-items: center;
  justify-content: center;
`;
const MiniLetter = styled.span<{ $italic?: boolean }>`
  font-family: "Liberation Sans", sans-serif;
  font-size: 12px;
  font-weight: 700;
  font-style: ${(p) => (p.$italic ? "italic" : "normal")};
  color: #bbb;
`;
const MiniGlyph = styled.span`
  font-size: 15px;
  color: #b5b5b5;
`;

/* context menu */
const Menu = styled.div`
  position: absolute;
  left: 754px;
  top: 222px;
  width: 209px;
  height: 455px;
  background: #2e2e2d;
  border: 1px solid #555;
  padding: 2px 2px 0 0;
  z-index: 2;
  color: #e4e4e4;
`;
const MenuSearch = styled.div`
  height: 24px;
  margin: 0 4px 5px 4px;
  border: 1px solid #565656;
  background: #282828;
  color: #b0b0b0;
  font-size: 10.5px;
  display: flex;
  align-items: center;
  padding: 0 0 1px 6px;
  letter-spacing: 0.2px;
`;
const Item = styled.div<{ $dim?: boolean; $hover?: boolean }>`
  height: 22.5px;
  display: flex;
  align-items: center;
  color: ${(p) => (p.$dim ? "#444" : "#e4e4e4")};
  background: ${(p) => (p.$hover ? "#474747" : "transparent")};
  font-size: 11.1px;
  white-space: nowrap;

  u {
    text-underline-offset: 1.5px;
  }
`;
const ItemIcon = styled.div`
  width: 30px;
  flex: none;
  display: flex;
  justify-content: center;
  padding-right: 5px;
`;
const ItemArrow = styled.div`
  margin-left: auto;
  padding-right: 5px;
`;
const Sep = styled.div`
  height: 1px;
  margin: 1px 0 0 30px;
  background: #4c4c4c;
`;
const PasteHead = styled.div`
  height: 21px;
  margin-left: 24px;
  padding-left: 7px;
  background: #3d3d3c;
  font-weight: 700;
  font-size: 11px;
  display: flex;
  align-items: center;
  color: #e8e8e8;
`;
const PasteHeadWrap = styled.div`
  position: relative;
`;
const PasteHeadIcon = styled.div`
  position: absolute;
  left: 5px;
  top: 3px;
`;
const PasteRow = styled.div`
  height: 27px;
  margin-left: 24px;
  display: flex;
  align-items: center;
`;
const PasteSlot = styled.div`
  width: 28.6px;
  flex: none;
  display: flex;
  justify-content: center;
`;
const Spot = styled.div`
  position: absolute;
  left: 784px;
  top: 336px;
  width: 43px;
  height: 43px;
  border-radius: 50%;
  background: rgba(205, 195, 35, 0.62);
  z-index: 4;
`;
const Pointer = styled.div`
  position: absolute;
  left: 804px;
  top: 351px;
  z-index: 5;
`;

const COLS = ["O", "N", "M", "L", "K", "J", "I", "H", "G", "F", "E", "D", "C", "B", "A"];
const ROW_COUNT = 14;

const HEAD = ["اسم العميل", "القيمه", "السعر", "الكميه", "الصنف", "رقم الفاتوره"];
const BODY = ["محمد", "1000", "1000", "1", "موبايل", ""];
const LABELS = ["رقم الفاتوره", "الصنف", "الكميه", "السعر", "القيمه", "اسم العميل"];
const VALUES = ["2", "شاشه", "1", "2000", "2000", "خالد"];
const TABLE_COLS = ["K", "J", "I", "H", "G", "F"];

const sheetCell = (col: string, row: number): { kind: keyof typeof cellKinds; text: string } => {
  const t = TABLE_COLS.indexOf(col);
  if (t >= 0 && row === 2) return { kind: "head", text: HEAD[t] };
  if (t >= 0 && row === 3) return { kind: "body", text: BODY[t] };
  if (col === "A" && row >= 2 && row <= 7) return { kind: "label", text: LABELS[row - 2] };
  if (col === "B" && row >= 2 && row <= 7) return { kind: "value", text: VALUES[row - 2] };
  return { kind: "plain", text: "" };
};

const Row: FC<{ row: number }> = ({ row }) => (
  <>
    {COLS.map((c) => {
      const cell = sheetCell(c, row);
      return (
        <Cell key={c} $kind={cell.kind} $arabic={/[\u0600-\u06FF]/.test(cell.text)}>
          {cell.text}
        </Cell>
      );
    })}
    <RowHead $on={row === 4}>{row}</RowHead>
  </>
);

const Overlays = () => (
  <>
    <Whiteout />
    <Selection>
      <Handle />
    </Selection>
    <Ants />
    <Caption>
      <CaptionLine $h={51}>
        {"ctrl+ "}
        <CaptionArabic>سهم لاسفل</CaptionArabic>
      </CaptionLine>
      <CaptionLine $h={56}>
        <CaptionArabic>سهم لاسفل</CaptionArabic>
      </CaptionLine>
    </Caption>
  </>
);

const Sheet = () => (
  <SheetArea>
    <VScroll>
      <VBtn>
        <Caret dir="up" />
      </VBtn>
      <VThumb />
      <VTrack />
      <VBtn>
        <Caret dir="down" />
      </VBtn>
    </VScroll>
    <Grid>
      {COLS.map((c) => (
        <ColHead key={c} $on={c === "F"}>
          {c === "O" ? "" : c}
        </ColHead>
      ))}
      <ColHead>
        <CornerMark />
      </ColHead>
      {Array.from({ length: ROW_COUNT }, (_, i) => i + 1).map((row) => (
        <Row key={row} row={row} />
      ))}
    </Grid>
    <Overlays />
  </SheetArea>
);

const MiniToolbar = () => (
  <MiniBar>
    <MiniRow>
      <MiniCombo $w={63}>
        Calibri
        <Caret dir="down" color="#ccc" />
      </MiniCombo>
      <MiniCombo $w={47}>
        11
        <Caret dir="down" color="#ccc" />
      </MiniCombo>
      <MiniIcon $w={24}><GrowA /></MiniIcon>
      <MiniIcon $w={22}><GrowA small /></MiniIcon>
      <MiniIcon $w={20}><MiniGlyph>$</MiniGlyph></MiniIcon>
      <MiniIcon $w={12}><ChevronDown /></MiniIcon>
      <MiniIcon $w={25}><MiniGlyph>%</MiniGlyph></MiniIcon>
      <MiniIcon $w={15}><MiniGlyph>,</MiniGlyph></MiniIcon>
      <MiniIcon $w={24}><TableTiny /></MiniIcon>
    </MiniRow>
    <MiniRow>
      <MiniIcon $w={19}><MiniLetter>B</MiniLetter></MiniIcon>
      <MiniIcon $w={22}><MiniLetter $italic>I</MiniLetter></MiniIcon>
      <MiniIcon $w={21}><AlignIcon /></MiniIcon>
      <MiniIcon $w={20}><FillIcon /></MiniIcon>
      <MiniIcon $w={14}><ChevronDown /></MiniIcon>
      <MiniIcon $w={22}><FontColorIcon /></MiniIcon>
      <MiniIcon $w={13}><ChevronDown /></MiniIcon>
      <MiniIcon $w={21}><BorderIcon /></MiniIcon>
      <MiniIcon $w={13}><ChevronDown /></MiniIcon>
      <MiniIcon $w={23}><DecimalIcon /></MiniIcon>
      <MiniIcon $w={20}><DecimalIcon flip /></MiniIcon>
      <MiniIcon $w={20}><BrushIcon /></MiniIcon>
    </MiniRow>
  </MiniBar>
);

const ContextMenu = () => (
  <Menu>
    <MenuSearch>Search the menus</MenuSearch>
    <Item>
      <ItemIcon><ScissorsIcon /></ItemIcon>
      <span>Cu<u>t</u></span>
    </Item>
    <Item>
      <ItemIcon><CopyIcon /></ItemIcon>
      <span><u>C</u>opy</span>
    </Item>
    <PasteHeadWrap>
      <PasteHeadIcon><PasteIcon /></PasteHeadIcon>
      <PasteHead>Paste Options:</PasteHead>
    </PasteHeadWrap>
    <PasteRow>
      <PasteSlot>
        <PasteBoard tag={<path d="M10 11H16L20 15V24H10Z" fill="#f4f4f4" />} />
      </PasteSlot>
      <PasteSlot>
        <PasteBoard tag={<text x="4" y="23" fontSize="10" fontFamily={UI} fill="#eee" stroke="#222" strokeWidth=".2">123</text>} />
      </PasteSlot>
      <PasteSlot>
        <PasteBoard tag={<text x="8" y="22" fontSize="15" fontStyle="italic" fontFamily="Liberation Serif" fill="#eee">fx</text>} />
      </PasteSlot>
      <PasteSlot>
        <PasteBoard tag={<path d="M9 12H20V22H9Z" fill="#555" stroke="#ddd" />} />
      </PasteSlot>
      <PasteSlot>
        <PasteBoard tag={<path d="M3 22L8 6H16L11 22Z M8 14L18 8" fill="#3f7fc4" stroke="#eee" />} />
      </PasteSlot>
      <PasteSlot>
        <PasteBoard tag={<rect x="7" y="17" width="13" height="6" rx="3" stroke="#2f6db5" strokeWidth="2" />} />
      </PasteSlot>
    </PasteRow>
    <Item $hover>
      <ItemIcon />
      <span>Paste <u>S</u>pecial...</span>
      <ItemArrow><Caret dir="right" /></ItemArrow>
    </Item>
    <Sep />
    <Item>
      <ItemIcon><LookupIcon /></ItemIcon>
      <span>Smart <u>L</u>ookup</span>
    </Item>
    <Sep />
    <Item>
      <ItemIcon />
      <span>Insert Copied C<u>e</u>lls...</span>
    </Item>
    <Item>
      <ItemIcon />
      <span><u>D</u>elete...</span>
    </Item>
    <Item>
      <ItemIcon />
      <span>Clear Co<u>n</u>tents</span>
    </Item>
    <Sep />
    <Item $dim>
      <ItemIcon><QuickIcon /></ItemIcon>
      <span><u>Q</u>uick Analysis</span>
    </Item>
    <Item>
      <ItemIcon />
      <span>Filt<u>e</u>r</span>
      <ItemArrow><Caret dir="right" /></ItemArrow>
    </Item>
    <Item>
      <ItemIcon />
      <span>S<u>o</u>rt</span>
      <ItemArrow><Caret dir="right" /></ItemArrow>
    </Item>
    <Sep />
    <Item>
      <ItemIcon><DataTableIcon /></ItemIcon>
      <span><u>G</u>et Data from Table/Range...</span>
    </Item>
    <Sep />
    <Item>
      <ItemIcon><AddNoteIcon /></ItemIcon>
      <span>Insert Co<u>m</u>ment</span>
    </Item>
    <Sep />
    <Item>
      <ItemIcon><FormatCellsIcon /></ItemIcon>
      <span><u>F</u>ormat Cells...</span>
    </Item>
    <Item>
      <ItemIcon />
      <span>Pic<u>k</u> From Drop-down List...</span>
    </Item>
    <Item>
      <ItemIcon />
      <span>Define N<u>a</u>me...</span>
    </Item>
    <Sep />
    <Item>
      <ItemIcon><LinkIcon /></ItemIcon>
      <span>L<u>i</u>nk</span>
    </Item>
  </Menu>
);

const TABS: [string, number][] = [
  ["File", 56], ["Home", 56], ["Insert", 53], ["Page Layout", 87], ["Formulas", 72], ["Data", 46],
  ["Review", 63], ["View", 47], ["Developer", 76], ["Help", 48], ["Power Pivot", 86],
];

export default function App() {
  return (
    <Page>
      <GlobalStyle />
      <TitleBar>
        <DocTitle>{"New Microsoft Excel Worksheet.xlsx  -  Excel"}</DocTitle>
        <WindowButtons>
          <SignIn>Sign in</SignIn>
          <WinBtn><DisplayIcon /></WinBtn>
          <WinBtn><MinDash /></WinBtn>
          <WinBtn><RestoreIcon /></WinBtn>
          <WinBtn><CloseX size={11} color="#eee" /></WinBtn>
        </WindowButtons>
      </TitleBar>

      <TabRow>
        {TABS.map(([label, w]) => (
          <Tab key={label} $w={w} $active={label === "View"}>
            {label}
          </Tab>
        ))}
        <TellMe>
          <BulbIcon />
          Tell me what you want to do
        </TellMe>
        <TabEnd><CommentIcon /></TabEnd>
      </TabRow>

      <Ribbon>
        <Group $w={201}>
          <GroupBody $pad={8}>
            <BigBtn $w={42} $on>
              <BigIcon><NormalIcon /></BigIcon>
              <BigText>Normal</BigText>
            </BigBtn>
            <BigBtn $w={58}>
              <BigIcon><PageBreakIcon /></BigIcon>
              <BigText>{"Page Break\nPreview"}</BigText>
            </BigBtn>
            <BigBtn $w={42}>
              <BigIcon><PageLayoutIcon /></BigIcon>
              <BigText>{"Page\nLayout"}</BigText>
            </BigBtn>
            <BigBtn $w={40} $dim>
              <BigIcon><CustomIcon /></BigIcon>
              <BigText>{"Custom\nViews"}</BigText>
            </BigBtn>
          </GroupBody>
          <GroupLabel>Workbook Views</GroupLabel>
        </Group>
        <Group $w={171}>
          <GroupBody>
            <CheckGrid>
              <CheckRow $dim><CheckBox dim />Ruler</CheckRow>
              <CheckRow><CheckBox checked />Formula Bar</CheckRow>
              <CheckRow><CheckBox checked />Gridlines</CheckRow>
              <CheckRow><CheckBox checked />Headings</CheckRow>
            </CheckGrid>
          </GroupBody>
          <GroupLabel>Show</GroupLabel>
        </Group>
        <Group $w={144}>
          <GroupBody $pad={8}>
            <BigBtn $w={36}>
              <BigIcon><ZoomIcon /></BigIcon>
              <BigText>Zoom</BigText>
            </BigBtn>
            <BigBtn $w={46}>
              <BigIcon><HundredIcon /></BigIcon>
              <BigText>100%</BigText>
            </BigBtn>
            <BigBtn $w={42}>
              <BigIcon><ZoomSelIcon /></BigIcon>
              <BigText>{"Zoom to\nSelection"}</BigText>
            </BigBtn>
          </GroupBody>
          <GroupLabel>Zoom</GroupLabel>
        </Group>
        <Group $w={431}>
          <GroupBody $pad={8}>
            <BigBtn $w={42}>
              <BigIcon><NewWindowIcon /></BigIcon>
              <BigText>{"New\nWindow"}</BigText>
            </BigBtn>
            <BigBtn $w={48}>
              <BigIcon><ArrangeIcon /></BigIcon>
              <BigText>{"Arrange\nAll"}</BigText>
            </BigBtn>
            <BigBtn $w={40}>
              <BigIcon><FreezeIcon /></BigIcon>
              <BigText>
                Freeze{"\n"}Panes<ChevInline><ChevronDown /></ChevInline>
              </BigText>
            </BigBtn>
            <SmallCol $w={70} $pad={6}>
              <SmallRow><SmallWinIcon />Split</SmallRow>
              <SmallRow><SmallWinIcon $bottom />Hide</SmallRow>
              <SmallRow $dim><SmallDimIcon />Unhide</SmallRow>
            </SmallCol>
            <SmallCol $w={150} $pad={8}>
              <SmallRow $dim><DimDocsIcon />View Side by Side</SmallRow>
              <SmallRow $dim><DimDocsIcon />Synchronous Scrolling</SmallRow>
              <SmallRow $dim><DimDocsIcon />Reset Window Position</SmallRow>
            </SmallCol>
            <BigBtn $w={67}>
              <BigIcon><SwitchIcon /></BigIcon>
              <BigText>
                Switch{"\n"}Windows<ChevInline><ChevronDown /></ChevInline>
              </BigText>
            </BigBtn>
          </GroupBody>
          <GroupLabel>Window</GroupLabel>
        </Group>
        <Group $w={56}>
          <GroupBody>
            <BigBtn $w={55}>
              <BigIcon><MacrosIcon /></BigIcon>
              <BigText>Macros</BigText>
              <ChevLine><ChevronDown /></ChevLine>
            </BigBtn>
          </GroupBody>
          <GroupLabel>Macros</GroupLabel>
        </Group>
        <Collapse><TrayChevron /></Collapse>
      </Ribbon>

      <Qat>
        <QatItem $w={26}><SaveIcon /></QatItem>
        <QatItem $w={20}><UndoIcon /></QatItem>
        <QatItem $w={21}><ChevronDown color="#999" /></QatItem>
        <QatItem $w={20}><UndoIcon dim /></QatItem>
        <QatItem $w={13}><ChevronDown color="#444" /></QatItem>
        <QatItem $w={28}><TouchIcon /></QatItem>
        <QatItem $w={29}><FormIcon /></QatItem>
        <QatItem $w={10}><QatMore /></QatItem>
      </Qat>

      <MessageBar>
        <InfoIcon />
        <MsgLabel>GET GENUINE OFFICE</MsgLabel>
        <MsgText>
          Your license isn't genuine, and you may be a victim of software counterfeiting. Avoid interruption and keep your files safe
        </MsgText>
        <MsgButton $w={70} />
        <MsgButton $w={87}>Learn more</MsgButton>
        <MsgClose><CloseX /></MsgClose>
      </MessageBar>

      <FormulaWrap>
        <FormulaBar>
          <NameBox>
            F4
            <Caret dir="down" />
          </NameBox>
          <Dots><Dot /><Dot /><Dot /></Dots>
          <FxBox>
            <CloseX color="#5c5c5c" weight={1.8} />
            <CheckMark />
            <Fx>fx</Fx>
          </FxBox>
          <FormulaInput><Caret dir="up" /></FormulaInput>
        </FormulaBar>
      </FormulaWrap>

      <Sheet />

      <SheetBar>
        <HScroll>
          <HBtn><Caret dir="left" /></HBtn>
          <HThumb />
          <HTrack />
          <HBtn><Caret dir="right" /></HBtn>
        </HScroll>
        <HDots><Dot /><Dot /><Dot /></HDots>
        <AddSheet>+</AddSheet>
        <SheetTab>Sheet1</SheetTab>
        <TabArrows>
          <Caret dir="left" color="#999" />
          <Caret dir="right" color="#ddd" />
        </TabArrows>
      </SheetBar>

      <StatusBar>
        Ready
        <MacroBox />
        <Access>
          <AccessIcon />
          Accessibility: Investigate
        </Access>
        <ViewGroup>
          <ViewBtn $w={37} $on><NormalViewIcon /></ViewBtn>
          <ViewBtn $w={38}><LayoutViewIcon /></ViewBtn>
          <ViewBtn $w={37}><BreakViewIcon /></ViewBtn>
          <ZoomSign $ml={4}>−</ZoomSign>
          <ZoomSlider><ZoomThumb /></ZoomSlider>
          <ZoomSign>+</ZoomSign>
          <ZoomPct>120%</ZoomPct>
        </ViewGroup>
      </StatusBar>

      <Taskbar>
        <TaskBtn><WinLogo /></TaskBtn>
        <TaskBtn><SearchTaskIcon /></TaskBtn>
        <TaskBtn><TaskViewIcon /></TaskBtn>
        <TaskBtn><EdgeIcon /></TaskBtn>
        <TaskBtn><FolderIcon /></TaskBtn>
        <TaskBtn><StoreIcon /></TaskBtn>
        <TaskBtn><MailIcon /></TaskBtn>
        <TaskBtn><FirefoxIcon /></TaskBtn>
        <TaskBtn><VpnIcon /></TaskBtn>
        <TaskBtn $bar><ChromeIcon /></TaskBtn>
        <TaskBtn $on $bar><ExcelIcon /></TaskBtn>
        <Tray>
          <WeatherIcon />
          <TrayText $ml={8} $size={13}>27°C</TrayText>
          <TrayText $ml={8}>صافي غالبًا</TrayText>
          <TrayText $ml={23} $mr={6}><TrayChevron /></TrayText>
          <TrayIcon><MeetIcon /></TrayIcon>
          <TrayIcon><MicIcon /></TrayIcon>
          <TrayIcon><NetIcon /></TrayIcon>
          <TrayIcon><SpeakerIcon /></TrayIcon>
          <TrayText $ml={11}>ع</TrayText>
          <Clock>11:06 PM<br />9/20/2023</Clock>
          <Notify><NotifyIcon /></Notify>
        </Tray>
      </Taskbar>
      <Foot />

      <MiniToolbar />
      <ContextMenu />
      <Spot />
      <Pointer>
        <Ic w={12} h={18}>
          <path d="M1 1V15L4.500 11.500L7 17L9.500 16L7 10.500H11.500Z" fill="#fff" stroke="#222" />
        </Ic>
      </Pointer>
    </Page>
  );
}
